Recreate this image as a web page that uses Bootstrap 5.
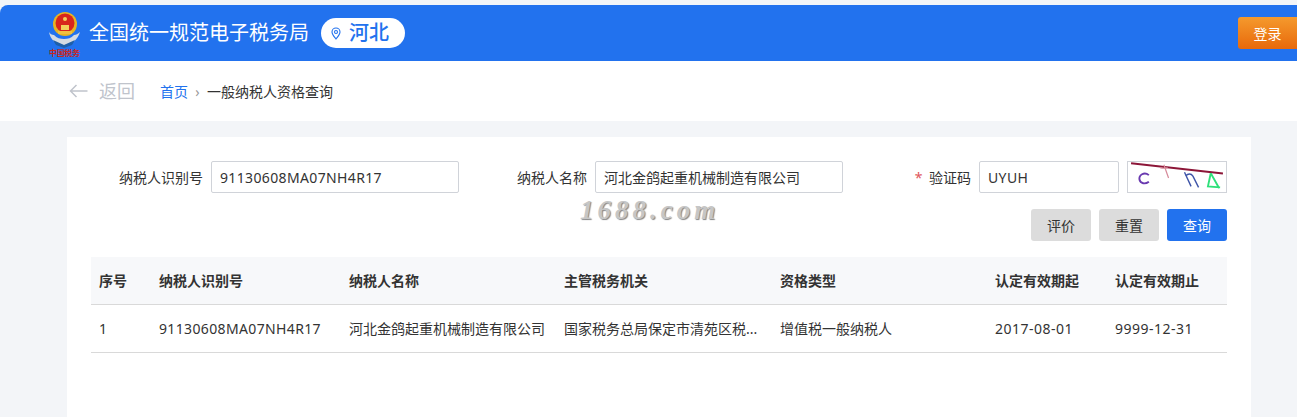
<!DOCTYPE html>
<html lang="zh-CN">
<head>
  <meta charset="UTF-8" />
  <title>一般纳税人资格查询</title>
  <link href="https://cdn.jsdelivr.net/npm/bootstrap@5.3.0/dist/css/bootstrap.min.css" rel="stylesheet" />
  <style>
    html, body { height: 100%; overflow: hidden; }
    body {
      background: #f3f5f8;
      padding-top: 5px;
      font-family: "Noto Sans", "Noto Sans CJK SC", sans-serif;
      font-size: 14px;
      color: #333;
    }
    .tax-header {
      height: 56px;
      background: #2272ee;
      border-top-left-radius: 8px;
      padding-left: 48px;
    }
    .tax-logo { width: 33px; height: 46px; margin-top: 1px; }
    .tax-logo-text { font-size: 8px; font-weight: 700; fill: #c8261c; }
    .site-name { color: #fff; font-size: 20px; margin-left: 8px; margin-right: 12px; }
    .region-pill {
      width: 84px; height: 30px;
      padding-left: 10px;
      background: #fff;
      border-radius: 15px;
      color: #2272ee;
      font-size: 20px;
      font-weight: 500;
    }
    .btn-login {
      width: 59px; height: 32px;
      padding: 0;
      color: #fff;
      font-size: 14px;
      border: 0;
      border-radius: 3px 0 0 3px;
      background: linear-gradient(#f59a2d, #e8690b);
    }
    .sub-bar { height: 60px; background: #fff; padding-left: 69px; }
    .back-link { color: #c0c4cc; font-size: 18px; width: 91px; }
    .back-link svg { margin-right: 10px; flex: none; }
    .crumb-home { color: #2272ee; }
    .crumb-sep { width: 19px; text-align: center; color: #999; }
    .crumb-now { color: #333; }
    .main-panel {
      position: relative;
      margin: 16px 46px 0 67px;
      height: 280px;
      overflow: hidden;
      background: #fff;
      padding: 24px;
    }
    .query-form {
      display: grid;
      grid-template-columns: repeat(3, 368px);
      gap: 16px;
    }
    .form-label-box { width: 120px; padding-right: 8px; text-align: right; flex: none; }
    .req-star { color: #e0555b; margin-right: 3px; }
    .plain-input {
      height: 32px;
      padding: 0 8px;
      border: 1px solid #d0d3d9;
      border-radius: 2px;
      font-size: 14px;
      color: #333;
      min-width: 0;
    }
    .plain-input:focus { outline: none; }
    .num-text { letter-spacing: .36px; }
    .captcha-img { width: 100px; height: 32px; border: 1px solid #d0d3d9; margin-left: 8px; flex: none; }
    .act-btn {
      width: 60px; height: 32px;
      padding: 0;
      font-size: 14px;
      border: 0;
      border-radius: 3px;
      background: #dcdcdc;
      color: #333;
    }
    .act-btn.act-primary { background: #2272ee; color: #fff; }
    .result-table { margin: 16px 0 0; table-layout: fixed; width: 1136px; color: #333; }
    .result-table th {
      height: 47px;
      background: #f7f8fa;
      font-weight: 700;
      font-size: 14px;
      vertical-align: middle;
      padding: 0 8px;
      border-bottom: 1px solid #d9d9d9;
    }
    .result-table td {
      height: 48px;
      vertical-align: middle;
      padding: 0 8px;
      border-bottom: 1px solid #d9d9d9;
      white-space: nowrap;
    }
    .date-text { letter-spacing: .5px; }
    .watermark {
      position: absolute;
      left: 513px;
      top: 56px;
      font-family: "Liberation Serif", serif;
      font-style: italic;
      font-weight: 700;
      font-size: 27px;
      letter-spacing: 4px;
      line-height: 34px;
      color: #c6c6c6;
      text-shadow: 1px 1px 1px #858585;
    }
  </style>
</head>
<body>
  <header class="tax-header d-flex align-items-center">
    <svg class="tax-logo" viewBox="0 0 33 46">
      <path d="M1 21c1 7 7 13 15 13s14-6 16-13c-2 2-4 3-6 3-3 3-6 4-10 4s-7-1-10-4c-2 0-4-1-5-3z" fill="#d5dbe3"/>
      <path d="M5 29l11 5 11-5-3 5-8 3-8-3z" fill="#1f5fa8"/>
      <circle cx="17" cy="13" r="12" fill="#e6b422"/>
      <circle cx="17" cy="12" r="9.500" fill="#d8261c"/>
      <path d="M10 20h14v3H10z" fill="#f0c040"/>
      <path d="M13 14h8v5h-8z" fill="#f3cf5a"/>
      <circle cx="17" cy="8" r="2" fill="#f3cf5a"/>
      <text class="tax-logo-text" x="1" y="45" textLength="31">中国税务</text>
    </svg>
    <span class="site-name">全国统一规范电子税务局</span>
    <div class="region-pill d-flex align-items-center gap-2">
      <svg width="10" height="13" viewBox="0 0 10 13" fill="none" stroke="#2272ee" stroke-width="1.1">
        <path d="M5 12C3 9.500 1 7.500 1 5a4 4 0 0 1 8 0c0 2.500-2 4.500-4 7z"/>
        <circle cx="5" cy="5" r="1.500"/>
      </svg>
      <span>河北</span>
    </div>
    <button class="btn btn-login ms-auto" type="button">登录</button>
  </header>

  <nav class="sub-bar d-flex align-items-center">
    <div class="back-link d-flex align-items-center">
      <svg width="20" height="14" viewBox="0 0 20 14" fill="none" stroke="#c0c4cc" stroke-width="1.500">
        <path d="M18.500 7H1.500M7.500 1l-6 6 6 6"/>
      </svg>
      <span class="flex-shrink-0">返回</span>
    </div>
    <a class="crumb-home text-decoration-none" href="#">首页</a>
    <span class="crumb-sep">›</span>
    <span class="crumb-now">一般纳税人资格查询</span>
  </nav>

  <main class="main-panel">
    <form class="query-form">
      <div class="d-flex align-items-center">
        <label class="form-label-box">纳税人识别号</label>
        <input class="plain-input num-text flex-grow-1" value="91130608MA07NH4R17" />
      </div>
      <div class="d-flex align-items-center">
        <label class="form-label-box">纳税人名称</label>
        <input class="plain-input flex-grow-1" value="河北金鸽起重机械制造有限公司" />
      </div>
      <div class="d-flex align-items-center">
        <label class="form-label-box"><span class="req-star">*</span> 验证码</label>
        <input class="plain-input num-text flex-grow-1" value="UYUH" />
        <svg class="captcha-img" viewBox="0 0 100 32" fill="none">
          <path d="M1 1.300l98 11" stroke="#8c1638" stroke-width="2"/>
          <path d="M36 3l5 14M32 6c3 1 5 1 8 0" stroke="#d68a9a" stroke-width="1.300"/>
          <path d="M20 14c-5-4-11 0-10 5 1 4 6 5 10 2" stroke="#6a3ab0" stroke-width="2"/>
          <path d="M58 11l7 15M59 15c3-3 6-3 8 0l6 12" stroke="#3f55a8" stroke-width="1.500"/>
          <path d="M86 12l-3 14 13 1M86 12l9 16" stroke="#2fe07a" stroke-width="2"/>
        </svg>
      </div>
    </form>
    <div class="d-flex justify-content-end gap-2 mt-3">
      <button class="act-btn" type="button">评价</button>
      <button class="act-btn" type="button">重置</button>
      <button class="act-btn act-primary" type="button">查询</button>
    </div>
    <table class="table result-table">
      <colgroup>
        <col style="width:60px"><col style="width:190px"><col style="width:215px"><col style="width:216px"><col style="width:215px"><col style="width:120px"><col style="width:120px">
      </colgroup>
      <thead>
        <tr>
          <th>序号</th><th>纳税人识别号</th><th>纳税人名称</th><th>主管税务机关</th><th>资格类型</th><th>认定有效期起</th><th>认定有效期止</th>
        </tr>
      </thead>
      <tbody>
        <tr>
          <td>1</td>
          <td class="num-text">91130608MA07NH4R17</td>
          <td>河北金鸽起重机械制造有限公司</td>
          <td>国家税务总局保定市清苑区税...</td>
          <td>增值税一般纳税人</td>
          <td class="date-text">2017-08-01</td>
          <td class="date-text">9999-12-31</td>
        </tr>
      </tbody>
    </table>
    <div class="watermark">1688.com</div>
  </main>
</body>
</html>
